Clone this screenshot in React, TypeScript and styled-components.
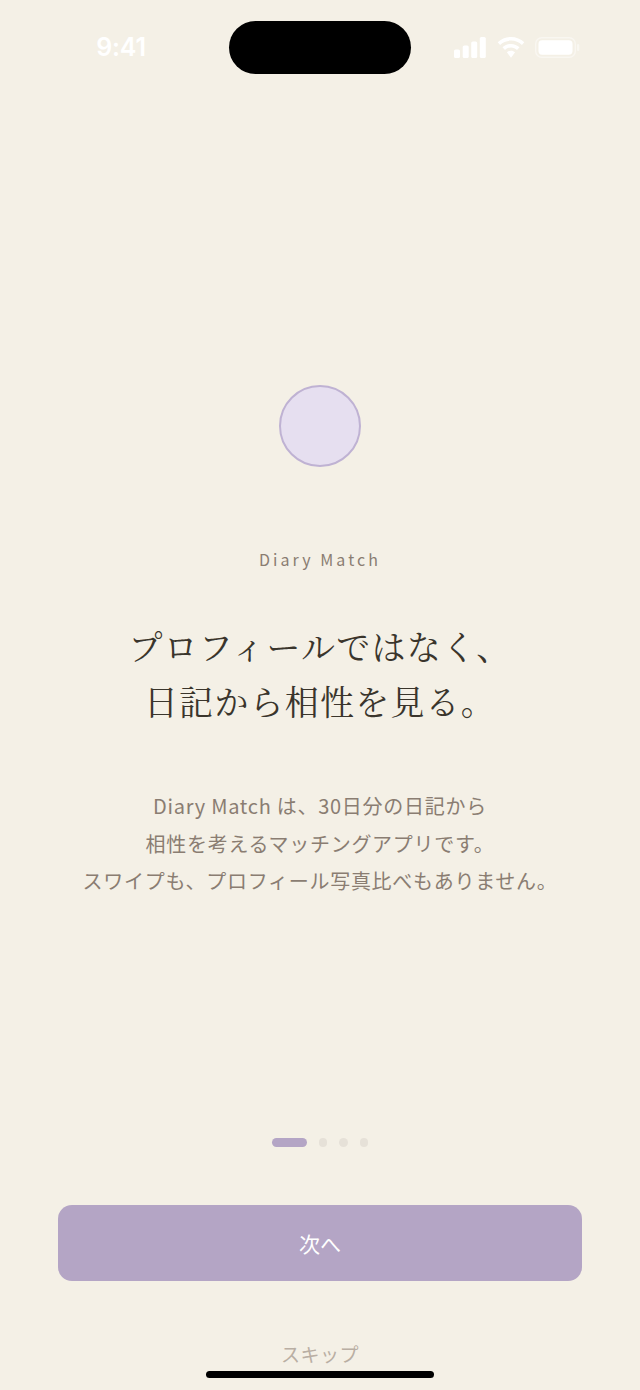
import React from 'react';
import styled, { createGlobalStyle } from 'styled-components';

const GlobalStyle = createGlobalStyle`
  html, body {
    margin: 0;
    padding: 0;
    background: #f4f0e6;
  }
  * {
    box-sizing: border-box;
  }
`;

const TITLE_LINES = ['プロフィールではなく、', '日記から相性を見る。'];
const BODY_LINES = [
  'Diary Match は、30日分の日記から',
  '相性を考えるマッチングアプリです。',
  'スワイプも、プロフィール写真比べもありません。',
];
const STEPS = [true, false, false, false];

function SignalIcon(): JSX.Element {
  return (
    <svg width="33" height="21" viewBox="0 0 33 21" fill="#fff">
      <rect x="0" y="12.5" width="6" height="8.5" rx="1.6" />
      <rect x="8.7" y="8.5" width="6" height="12.5" rx="1.6" />
      <rect x="17.2" y="4.5" width="6" height="16.5" rx="1.6" />
      <rect x="25.8" y="0" width="6" height="21" rx="1.6" />
    </svg>
  );
}

function WifiIcon(): JSX.Element {
  return (
    <svg width="28" height="21" viewBox="0 0 28 21" fill="#fff">
      <path d="M14 0C8.9 0 4.2 2 .7 5.3l2.4 2.6C5.9 5.2 9.8 3.6 14 3.6s8.1 1.6 10.9 4.3l2.4-2.6C23.800 2 19.100 0 14 0z" />
      <path d="M14 6.900c-3.300 0-6.300 1.300-8.500 3.400l2.500 2.600c1.600-1.500 3.700-2.400 6-2.400s4.400.9 6 2.400l2.500-2.600c-2.200-2.100-5.200-3.400-8.500-3.400z" />
      <path d="M14 13.700c-1.600 0-3 .6-4.100 1.600L14 20.700l4.100-5.400c-1.100-1-2.500-1.600-4.100-1.600z" />
    </svg>
  );
}

function BatteryIcon(): JSX.Element {
  return (
    <svg width="45" height="21" viewBox="0 0 45 21" fill="none">
      <rect x="0.7" y="0.7" width="39.6" height="19.6" rx="6" stroke="#fff" strokeOpacity="0.45" strokeWidth="1.4" />
      <rect x="3.500" y="3.300" width="34" height="14.400" rx="3.600" fill="#fff" />
      <rect x="42" y="7" width="2.300" height="7" rx="1.100" fill="#fff" fillOpacity="0.45" />
    </svg>
  );
}

function App(): JSX.Element {
  return (
    <Screen>
      <GlobalStyle />
      <StatusBar>
        <Time>9:41</Time>
        <Island />
        <StatusIcons>
          <SignalIcon />
          <WifiIcon />
          <BatteryIcon />
        </StatusIcons>
      </StatusBar>
      <Hero>
        <Circle />
        <Label>Diary Match</Label>
        <Title>
          {TITLE_LINES.map((line) => (
            <span key={line}>{line}</span>
          ))}
        </Title>
        <Body>
          {BODY_LINES.map((line) => (
            <span key={line}>{line}</span>
          ))}
        </Body>
      </Hero>
      <Footer>
        <Pager>
          {STEPS.map((active, i) => (
            <Dot key={i} $active={active} />
          ))}
        </Pager>
        <NextButton>次へ</NextButton>
        <SkipButton>スキップ</SkipButton>
      </Footer>
      <HomeIndicator />
    </Screen>
  );
}

const Screen = styled.div`
  position: relative;
  width: 640px;
  height: 1390px;
  overflow: hidden;
  display: flex;
  flex-direction: column;
  background: #f4f0e6;
  font-family: 'Noto Sans CJK JP', 'Noto Sans', sans-serif;
`;
const StatusBar = styled.header`
  height: 74px;
  padding-top: 20px;
  display: grid;
  grid-template-columns: 229px 182px 229px;
  align-items: center;
`;
const Time = styled.div`
  text-align: center;
  margin-left: 13px;
  color: #fff;
  font-family: Inter, 'Liberation Sans', sans-serif;
  font-size: 25px;
  font-weight: 600;
  letter-spacing: -0.2px;
`;
const Island = styled.div`
  height: 53px;
  border-radius: 27px;
  background: #000;
`;
const StatusIcons = styled.div`
  display: flex;
  align-items: center;
  gap: 10px;
  padding-left: 43px;
`;
const Hero = styled.main`
  display: flex;
  flex-direction: column;
  align-items: center;
  padding-top: 311px;
`;
const Circle = styled.div`
  width: 82px;
  height: 82px;
  border-radius: 50%;
  border: 2px solid #bfb2d3;
  background: #e6dff0;
`;
const Label = styled.div`
  margin-top: 80px;
  color: #8a7d72;
  font-size: 16px;
  line-height: 24px;
  letter-spacing: 3.05px;
`;
const Title = styled.h1`
  margin: 47px 0 0;
  display: flex;
  flex-direction: column;
  align-items: center;
  color: #3a352c;
  font-family: 'Noto Serif CJK JP', 'Liberation Serif', 'Noto Sans CJK JP', serif;
  font-size: 34px;
  font-weight: 400;
  line-height: 55px;
  letter-spacing: 1.2px;
`;
const Body = styled.p`
  margin: 59px 0 0;
  display: flex;
  flex-direction: column;
  align-items: center;
  color: #8a7d72;
  font-size: 20px;
  line-height: 37.5px;
  letter-spacing: 0.72px;
`;
const Footer = styled.footer`
  margin-top: auto;
  padding: 0 58px 23px;
  display: flex;
  flex-direction: column;
  align-items: center;
`;
const Pager = styled.div`
  display: flex;
  align-items: center;
  gap: 12px;
`;
const Dot = styled.span<{ $active: boolean }>`
  width: ${(p) => (p.$active ? '35px' : '8.5px')};
  height: ${(p) => (p.$active ? '9px' : '8.5px')};
  border-radius: 5px;
  background: ${(p) => (p.$active ? '#b4a5c5' : '#e6e1d8')};
`;
const NextButton = styled.button`
  margin-top: 58px;
  width: 524px;
  height: 76px;
  border: 0;
  border-radius: 14px;
  background: #b4a5c5;
  color: #fff;
  font-family: inherit;
  font-size: 21px;
  font-weight: 400;
`;
const SkipButton = styled.button`
  margin-top: 59px;
  padding: 0;
  border: 0;
  background: none;
  color: #b9aea3;
  font-family: inherit;
  font-size: 19px;
  line-height: 27px;
  letter-spacing: 0.5px;
`;
const HomeIndicator = styled.div`
  position: absolute;
  left: 206px;
  bottom: 12px;
  width: 228px;
  height: 7px;
  border-radius: 4px;
  background: #000;
`;
export default App;
